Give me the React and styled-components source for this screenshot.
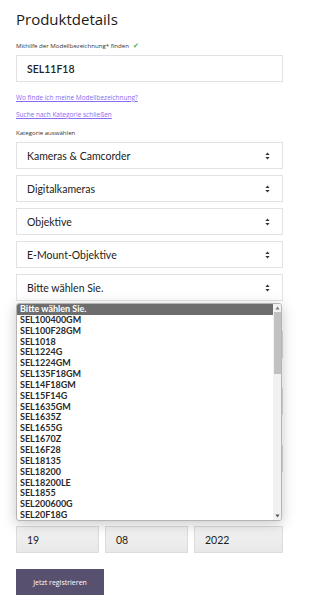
import styled, { createGlobalStyle } from "styled-components";

const GlobalStyle = createGlobalStyle`
  * { box-sizing: border-box; }
  body {
    margin: 0;
    background: #ffffff;
    font-family: "Open Sans", "Noto Sans", sans-serif;
    color: #222;
  }
`;

const Page = styled.div`
  padding: 9px 0 20px 16px;
  width: 320px;
`;

const Title = styled.h1`
  margin: 0;
  font-size: 15px;
  line-height: 20px;
  font-weight: 400;
  color: #1a1a1a;
`;

const Label = styled.div`
  margin-top: ${({ mt }) => mt || 0}px;
  font-size: 6.1px;
  line-height: 10px;
  color: #333;
  display: flex;
  align-items: center;
  gap: 4px;
`;

const Check = styled.span`
  color: #4caf50;
  font-size: 7px;
`;

const TextInput = styled.div`
  margin-top: 4px;
  width: 267px;
  height: 27px;
  border: 1px solid #e2e2e6;
  background: #fff;
  display: flex;
  align-items: center;
  padding-left: 10px;
  font-family: Lato, "Open Sans", sans-serif;
  font-size: 10.5px;
  font-weight: 600;
  color: #222;
`;

const Link = styled.a`
  display: block;
  margin-top: ${({ mt }) => mt}px;
  font-size: 6.5px;
  line-height: 10px;
  color: #8a6cf0;
  text-decoration: underline;
`;

const SelectStack = styled.div`
  margin-top: 4px;
  display: flex;
  flex-direction: column;
  gap: 6px;
  width: 267px;
`;

const SelectBox = styled.div`
  height: 27px;
  border: 1px solid #e2e2e6;
  background: #fff;
  display: flex;
  align-items: center;
  justify-content: space-between;
  padding: 0 12px 0 10px;
  font-family: Lato, "Open Sans", sans-serif;
  font-size: 10.5px;
  color: #222;
`;

const Anchor = styled.div`
  position: relative;
`;

const Listbox = styled.div`
  position: absolute;
  left: 0;
  top: 29px;
  width: 266px;
  height: 218px;
  display: flex;
  background: #fff;
  border: 1px solid #b5b5b5;
  border-radius: 3px;
  box-shadow: 0 3px 14px rgba(0, 0, 0, 0.22);
  overflow: hidden;
  z-index: 5;
`;

const Options = styled.div`
  flex: 1;
  display: flex;
  flex-direction: column;
`;

const Option = styled.div`
  height: 10.85px;
  line-height: 10.85px;
  padding-left: 3px;
  font-family: Lato, "Open Sans", sans-serif;
  font-size: 9px;
  font-weight: 700;
  color: ${({ selected }) => (selected ? "#fff" : "#2a2a2a")};
  background: ${({ selected }) => (selected ? "#6d6d6d" : "transparent")};
  white-space: nowrap;
`;

const Scrollbar = styled.div`
  width: 8px;
  background: #f1f1f1;
  display: flex;
  flex-direction: column;
  align-items: center;
`;

const ScrollArrow = styled.div`
  height: 8px;
  display: flex;
  align-items: center;
  justify-content: center;
`;

const Thumb = styled.div`
  width: 7px;
  height: 62px;
  background: #c1c1c1;
`;

const Track = styled.div`
  flex: 1;
`;

const Field = styled.div`
  margin-top: ${({ mt }) => mt}px;
`;

const LabelSpace = styled.div`
  height: 10px;
`;

const GrayInput = styled.div`
  margin-top: 6px;
  width: 267px;
  height: 27px;
  border: 1px solid #dcdcdc;
  background: linear-gradient(#f2f2f2, #e6e6e6);
`;

const DateRow = styled.div`
  margin-top: 6px;
  display: grid;
  grid-template-columns: 83px 83px 89px;
  gap: 6px;
  width: 267px;
`;

const DateBox = styled.div`
  height: 27px;
  border: 1px solid #dcdcdc;
  background: linear-gradient(#f3f3f3, #e8e8e8);
  display: flex;
  align-items: center;
  padding-left: 10px;
  font-family: Lato, "Open Sans", sans-serif;
  font-size: 10.5px;
  color: #222;
`;

const Button = styled.button`
  margin-top: 16px;
  width: 88px;
  height: 26px;
  border: none;
  background: #58506f;
  color: #fff;
  font-family: "Open Sans", sans-serif;
  font-size: 7px;
  padding: 0;
  cursor: pointer;
`;

const Chevron = () => (
  <svg width="5" height="8" viewBox="0 0 5 8">
    <path d="M2.5 0.5 L4.6 3 H0.4 Z" fill="#333" />
    <path d="M2.5 7.5 L4.6 5 H0.4 Z" fill="#333" />
  </svg>
);

const categories = [
  "Kameras & Camcorder",
  "Digitalkameras",
  "Objektive",
  "E-Mount-Objektive",
];

const models = [
  "SEL100400GM",
  "SEL100F28GM",
  "SEL1018",
  "SEL1224G",
  "SEL1224GM",
  "SEL135F18GM",
  "SEL14F18GM",
  "SEL15F14G",
  "SEL1635GM",
  "SEL1635Z",
  "SEL1655G",
  "SEL1670Z",
  "SEL16F28",
  "SEL18135",
  "SEL18200",
  "SEL18200LE",
  "SEL1855",
  "SEL200600G",
  "SEL20F18G",
];

export default function App() {
  return (
    <Page>
      <GlobalStyle />
      <Title>Produktdetails</Title>
      <Label mt={12}>
        Mithilfe der Modellbezeichnung* finden <Check>✔</Check>
      </Label>
      <TextInput>SEL11F18</TextInput>
      <Link mt={11}>Wo finde ich meine Modellbezeichnung?</Link>
      <Link mt={7}>Suche nach Kategorie schließen</Link>
      <Label mt={8}>Kategorie auswählen</Label>
      <SelectStack>
        {categories.map((c) => (
          <SelectBox key={c}>
            {c}
            <Chevron />
          </SelectBox>
        ))}
        <Anchor>
          <SelectBox>
            Bitte wählen Sie.
            <Chevron />
          </SelectBox>
          <Listbox>
            <Options>
              <Option selected>Bitte wählen Sie.</Option>
              {models.map((m) => (
                <Option key={m}>{m}</Option>
              ))}
            </Options>
            <Scrollbar>
              <ScrollArrow>
                <svg width="5" height="4" viewBox="0 0 5 4">
                  <path d="M2.5 0.5 L4.5 3.5 H0.5 Z" fill="#777" />
                </svg>
              </ScrollArrow>
              <Thumb />
              <Track />
              <ScrollArrow>
                <svg width="5" height="4" viewBox="0 0 5 4">
                  <path d="M2.5 3.5 L4.5 0.5 H0.5 Z" fill="#555" />
                </svg>
              </ScrollArrow>
            </Scrollbar>
          </Listbox>
        </Anchor>
      </SelectStack>
      <Field mt={14}>
        <LabelSpace />
        <GrayInput />
      </Field>
      <Field mt={14}>
        <LabelSpace />
        <GrayInput />
      </Field>
      <Field mt={14}>
        <LabelSpace />
        <GrayInput />
      </Field>
      <Field mt={38}>
        <LabelSpace />
        <DateRow>
          <DateBox>19</DateBox>
          <DateBox>08</DateBox>
          <DateBox>2022</DateBox>
        </DateRow>
      </Field>
      <Button>Jetzt registrieren</Button>
    </Page>
  );
}
